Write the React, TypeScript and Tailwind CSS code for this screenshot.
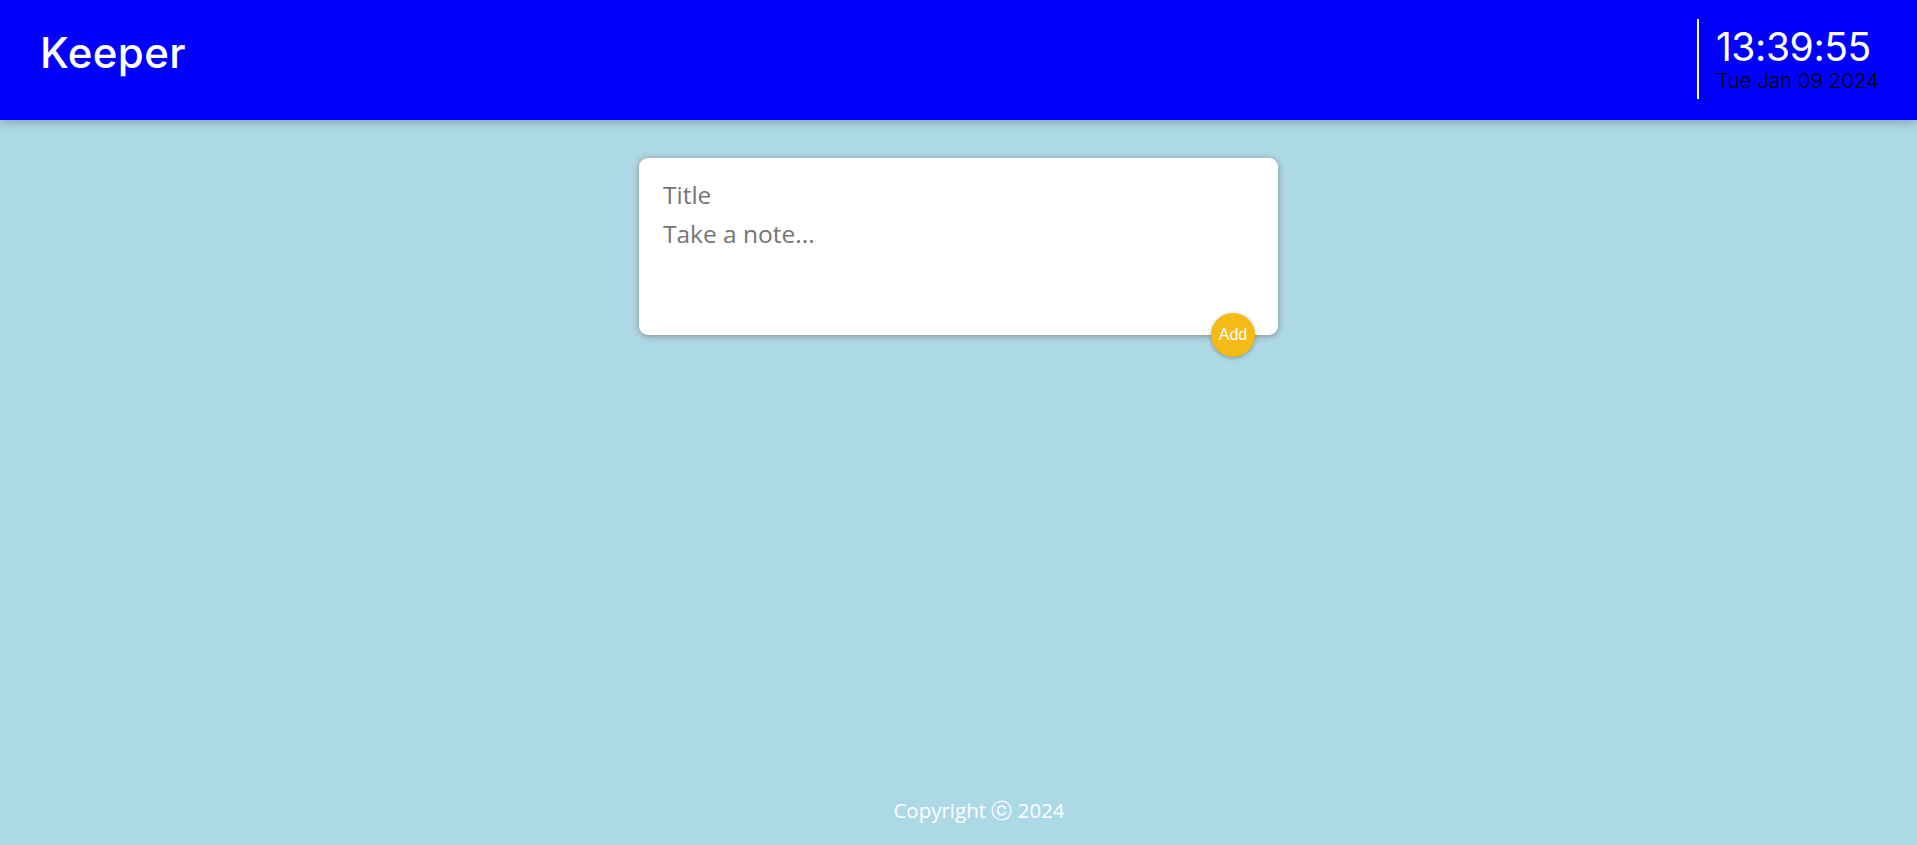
import React from 'react';

const Header: React.FC = () => (
  <header className="h-[120px] bg-[#0000ff] flex items-center justify-between pl-[40px] pr-[38px] shadow-[0_0_12px_0_rgba(0,0,0,0.35)] relative z-10">
    <h1 className="text-[42px] leading-none text-white font-['Inter',sans-serif] font-medium tracking-[0.01em] -mt-[14px]">Keeper</h1>
    <div className="flex items-stretch h-[80px] -mt-[2px]">
      <div className="w-[2px] bg-white mr-[17px]" />
      <div className="flex flex-col justify-center font-['Inter',sans-serif]">
        <span className="text-white text-[39px] leading-[44px] font-normal tracking-[-0.01em]">13:39:55</span>
        <span className="text-black text-[20.5px] leading-[24px] font-light">Tue Jan 09 2024</span>
      </div>
    </div>
  </header>
);

const CreateArea: React.FC = () => (
  <form className="relative w-[639px] mx-auto mt-[38px] bg-white rounded-[9px] p-[19px] shadow-[0_1px_6px_rgb(138,137,137)]">
    <input
      name="title"
      placeholder="Title"
      className="w-full border-none outline-none p-[5px] pt-[3px] text-[24.5px] leading-[30px] text-[#555] placeholder:text-[#757575] font-['Open_Sans',sans-serif]"
    />
    <textarea
      name="content"
      placeholder="Take a note..."
      rows={3}
      className="block w-full border-none outline-none resize-none p-[5px] pt-[4px] text-[24.5px] leading-[30px] h-[101px] text-[#555] placeholder:text-[#757575] font-['Open_Sans',sans-serif]"
    />
    <button
      type="button"
      className="absolute right-[23px] bottom-[-22px] w-[44px] h-[44px] rounded-full bg-[#f5ba13] text-white text-[16px] font-['Liberation_Sans',sans-serif] shadow-[0_1px_4px_rgba(0,0,0,0.3)]"
    >
      Add
    </button>
  </form>
);

export default function App() {
  return (
    <div className="min-h-screen bg-[#add8e6] flex flex-col">
      <Header />
      <main className="flex-1">
        <CreateArea />
      </main>
      <footer className="h-[50px] flex items-start justify-center pl-[41px] -mt-[2px]">
        <p className="text-white text-[20.5px] font-['Open_Sans',sans-serif]">Copyright ⓒ 2024</p>
      </footer>
    </div>
  );
}
